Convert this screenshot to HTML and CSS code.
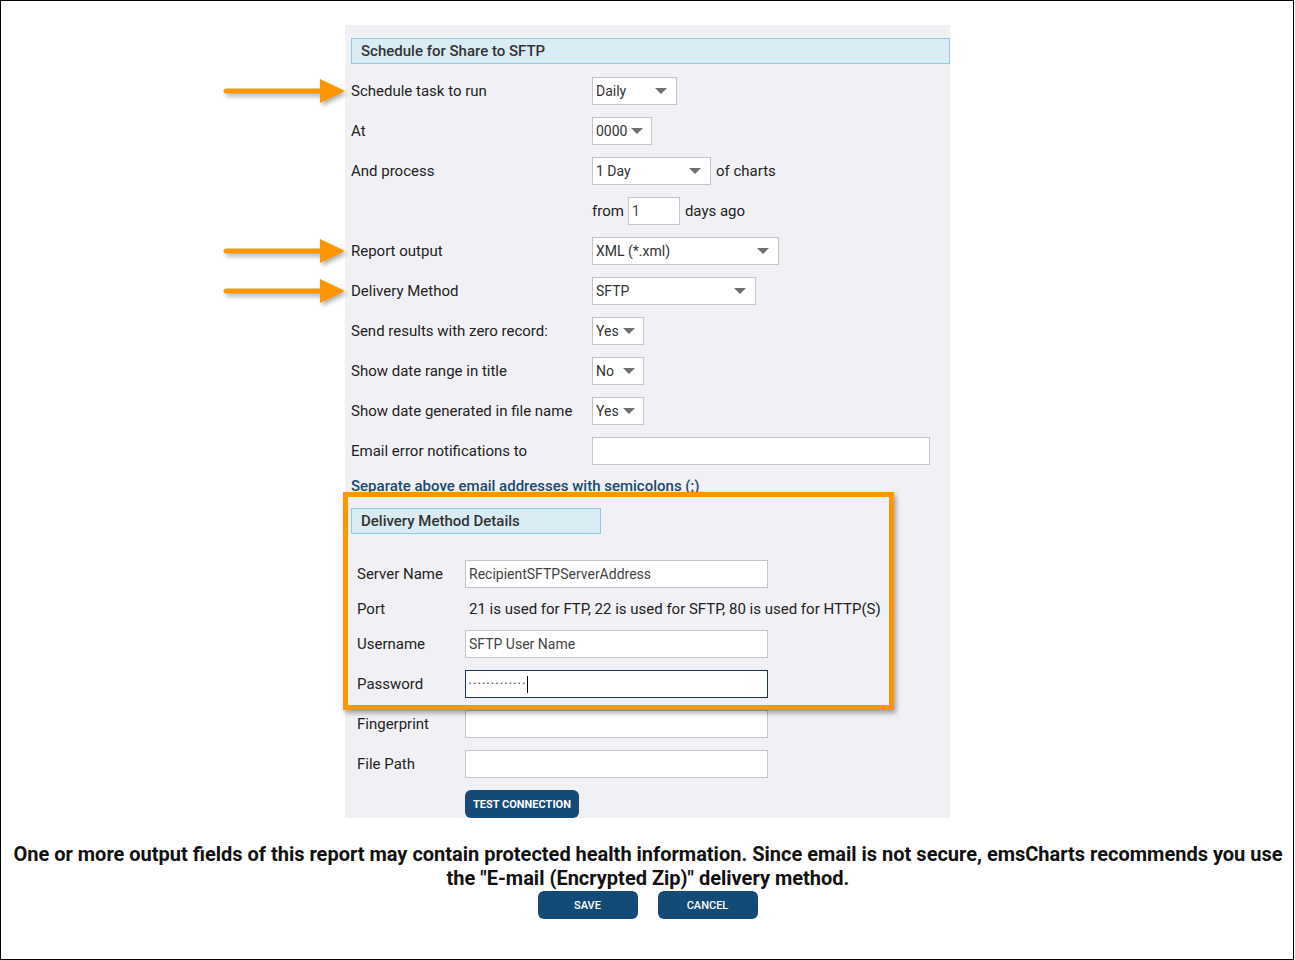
FILE: index.html
```html
<!DOCTYPE html>
<html lang="en">
<head>
    <meta charset="UTF-8">
    <meta name="viewport" content="width=device-width, initial-scale=1.0">
    <title>Schedule for Share to SFTP</title>
    <link rel="stylesheet" href="styles.css">
</head>
<body>
    <div class="frame">
        <div class="panel">
            <div class="section-title">Schedule for Share to SFTP</div>

            <div class="row">
                <svg class="arrow" viewBox="0 0 124 30"><line x1="3" y1="15" x2="100" y2="15"/><polygon points="97,3 122,15 97,27"/></svg>
                <div class="label">Schedule task to run</div>
                <div class="select w-daily"><span>Daily</span><i class="caret"></i></div>
            </div>
            <div class="row">
                <div class="label">At</div>
                <div class="select w-at"><span>0000</span><i class="caret"></i></div>
            </div>
            <div class="row">
                <div class="label">And process</div>
                <div class="select w-day"><span>1 Day</span><i class="caret"></i></div>
                <span class="after">of charts</span>
            </div>
            <div class="row">
                <div class="label"></div>
                <span>from</span>
                <input class="field small" type="text" value="1">
                <span class="after">days ago</span>
            </div>
            <div class="row">
                <svg class="arrow" viewBox="0 0 124 30"><line x1="3" y1="15" x2="100" y2="15"/><polygon points="97,3 122,15 97,27"/></svg>
                <div class="label">Report output</div>
                <div class="select w-xml"><span>XML (*.xml)</span><i class="caret"></i></div>
            </div>
            <div class="row">
                <svg class="arrow" viewBox="0 0 124 30"><line x1="3" y1="15" x2="100" y2="15"/><polygon points="97,3 122,15 97,27"/></svg>
                <div class="label">Delivery Method</div>
                <div class="select w-sftp"><span>SFTP</span><i class="caret"></i></div>
            </div>
            <div class="row">
                <div class="label">Send results with zero record:</div>
                <div class="select w-yn"><span>Yes</span><i class="caret"></i></div>
            </div>
            <div class="row">
                <div class="label">Show date range in title</div>
                <div class="select w-yn"><span>No</span><i class="caret"></i></div>
            </div>
            <div class="row">
                <div class="label">Show date generated in file name</div>
                <div class="select w-yn"><span>Yes</span><i class="caret"></i></div>
            </div>
            <div class="row">
                <div class="label">Email error notifications to</div>
                <input class="field email" type="text" value="">
            </div>

            <div class="note">Separate above email addresses with semicolons (;)</div>

            <div class="section-title short">Delivery Method Details</div>

            <div class="details">
                <div class="drow">
                    <div class="dlabel">Server Name</div>
                    <input class="field wide" type="text" value="RecipientSFTPServerAddress">
                </div>
                <div class="drow port">
                    <div class="dlabel">Port</div>
                    <span class="port-text">21 is used for FTP, 22 is used for SFTP, 80 is used for HTTP(S)</span>
                </div>
                <div class="drow">
                    <div class="dlabel">Username</div>
                    <input class="field wide" type="text" value="SFTP User Name">
                </div>
                <div class="drow">
                    <div class="dlabel">Password</div>
                    <div class="field wide focused"><span class="dots">•••••••••••••</span><i class="cursor"></i></div>
                </div>
                <div class="drow">
                    <div class="dlabel">Fingerprint</div>
                    <input class="field wide" type="text" value="">
                </div>
                <div class="drow">
                    <div class="dlabel">File Path</div>
                    <input class="field wide" type="text" value="">
                </div>
                <button class="btn test-btn">TEST CONNECTION</button>
            </div>

            <div class="highlight"></div>
        </div>

        <p class="warning">One or more output fields of this report may contain protected health information. Since email is not secure, emsCharts recommends you use the "E-mail (Encrypted Zip)" delivery method.</p>

        <div class="actions">
            <button class="btn">SAVE</button>
            <button class="btn">CANCEL</button>
        </div>
    </div>
</body>
</html>
```

FILE: styles.css
```css
body {
    margin: 0;
    font-family: Roboto, "Liberation Sans", sans-serif;
    font-size: 15px;
    color: #222;
    background-color: white;
}

.frame {
    width: 1294px;
    height: 960px;
    box-sizing: border-box;
    border: 1px solid #000;
    overflow: hidden;
}

.panel {
    position: relative;
    width: 605px;
    margin: 24px 0 0 344px;
    padding: 13px 0 0 6px;
    box-sizing: border-box;
    background-color: #f1f1f5;
}

.section-title {
    height: 26px;
    box-sizing: border-box;
    padding-left: 9px;
    line-height: 24px;
    font-weight: 500;
    color: #333;
    background-color: #d9ebf3;
    border: 1px solid #8ccbe1;
    margin-bottom: 7px;
}

.section-title.short {
    width: 250px;
    margin: 12px 0 0;
}

.row {
    position: relative;
    display: flex;
    align-items: center;
    height: 40px;
}

.label {
    width: 241px;
    flex-shrink: 0;
}

.after {
    margin-left: 5px;
}

.arrow {
    position: absolute;
    left: -128px;
    top: 5px;
    width: 124px;
    height: 30px;
    overflow: visible;
    filter: drop-shadow(2px 3px 2px rgba(0, 0, 0, 0.3));
}

.arrow line {
    stroke: #ff9500;
    stroke-width: 5;
    stroke-linecap: round;
}

.arrow polygon {
    fill: #ff9500;
}

.select {
    display: flex;
    align-items: center;
    justify-content: space-between;
    height: 28px;
    box-sizing: border-box;
    padding: 0 9px 0 3px;
    background-color: white;
    border: 1px solid #c4c4c8;
    font-size: 14px;
    color: #333;
}

.caret {
    width: 0;
    height: 0;
    border-left: 6px solid transparent;
    border-right: 6px solid transparent;
    border-top: 6px solid #6f6f6f;
}

.w-daily { width: 85px; }
.w-at { width: 60px; padding-right: 8px; }
.w-day { width: 119px; }
.w-xml { width: 187px; }
.w-sftp { width: 164px; }
.w-yn { width: 52px; padding-right: 8px; }

.field {
    height: 28px;
    box-sizing: border-box;
    padding: 0 3px;
    margin: 0;
    background-color: white;
    border: 1px solid #c4c4c8;
    border-radius: 0;
    font-family: Roboto, "Liberation Sans", sans-serif;
    font-size: 14px;
    color: #444;
    outline: none;
}

.field.small {
    width: 52px;
    margin-left: 4px;
}

.field.email {
    width: 338px;
}

.field.wide {
    width: 303px;
}

.field.focused {
    display: flex;
    align-items: center;
    border-color: #1d3550;
}

.dots {
    font-size: 7px;
    letter-spacing: 2.1px;
    color: #333;
}

.cursor {
    width: 1px;
    height: 17px;
    background-color: #000;
}

.note {
    height: 20px;
    line-height: 20px;
    margin-top: 5px;
    font-weight: 500;
    color: #1c4a70;
}

.details {
    padding-top: 20px;
}

.drow {
    display: flex;
    align-items: center;
    height: 40px;
}

.drow.port {
    height: 30px;
}

.dlabel {
    width: 108px;
    padding-left: 6px;
    flex-shrink: 0;
}

.port-text {
    padding-left: 4px;
}

.btn {
    height: 28px;
    padding: 0;
    border: none;
    border-radius: 6px;
    background-color: #144a78;
    color: white;
    font-family: Roboto, "Liberation Sans", sans-serif;
    font-size: 11px;
    font-weight: 500;
    cursor: pointer;
}

.test-btn {
    width: 114px;
    margin: 6px 0 0 114px;
    font-weight: 700;
    display: block;
}

.highlight {
    position: absolute;
    left: -2px;
    top: 467px;
    width: 551px;
    height: 218px;
    box-sizing: border-box;
    border: 5px solid #ff9500;
    box-shadow: 2px 3px 5px rgba(0, 0, 0, 0.35);
    pointer-events: none;
}

.warning {
    margin: 24px 0 0;
    padding-left: 2px;
    text-align: center;
    font-size: 20px;
    line-height: 24px;
    font-weight: 700;
    color: #111;
}

.actions {
    display: flex;
    justify-content: center;
    gap: 20px;
    margin-top: 1px;
    padding-left: 1px;
}

.actions .btn {
    width: 100px;
}
```
